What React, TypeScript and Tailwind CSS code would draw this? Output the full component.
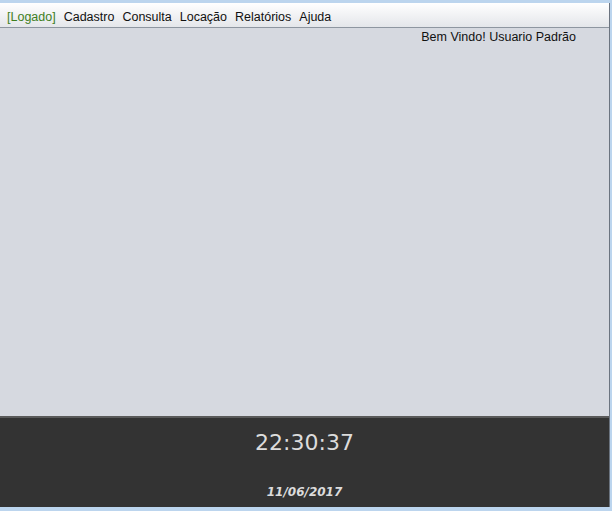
import React from 'react';

const menus = ['Cadastro', 'Consulta', 'Locação', 'Relatórios', 'Ajuda'];

export default function App() {
  return (
    <div className="w-[612px] h-[511px] bg-[#bcd5ee] pt-[3px] pr-[2px] pb-[4px] flex flex-col">
      <div className="flex-1 flex flex-col border-r border-[#6b7480]">
        {/* Menu bar */}
        <div
          className="h-[25px] pt-[5px] bg-gradient-to-b from-white to-[#e4e6ea] border-b border-[#8e96a0] flex items-center pl-[7px] gap-[8px] text-[12.5px] text-[#111]"
          style={{ fontFamily: '"Liberation Sans", Arial, sans-serif' }}
        >
          <span className="text-[#3f7f1f]">[Logado]</span>
          {menus.map((m) => (
            <span key={m}>{m}</span>
          ))}
        </div>

        {/* Desktop area */}
        <div
          className="flex-1 bg-[#d6d9e0] flex justify-end pr-[33px] pt-0 text-[12.5px] text-[#111]"
          style={{ fontFamily: '"Liberation Sans", Arial, sans-serif' }}
        >
          <span className="h-fit">Bem Vindo! Usuario Padrão</span>
        </div>

        {/* Clock panel */}
        <div
          className="h-[91px] bg-[#333333] border-t-2 border-[#5a5a5a] flex flex-col items-center text-[#dcdcdc]"
          style={{ fontFamily: '"DejaVu Sans", sans-serif' }}
        >
          <div className="text-[22px] leading-none mt-[14px]">22:30:37</div>
          <div className="text-[12px] font-bold italic leading-none mt-[32px]">11/06/2017</div>
        </div>
      </div>
    </div>
  );
}
